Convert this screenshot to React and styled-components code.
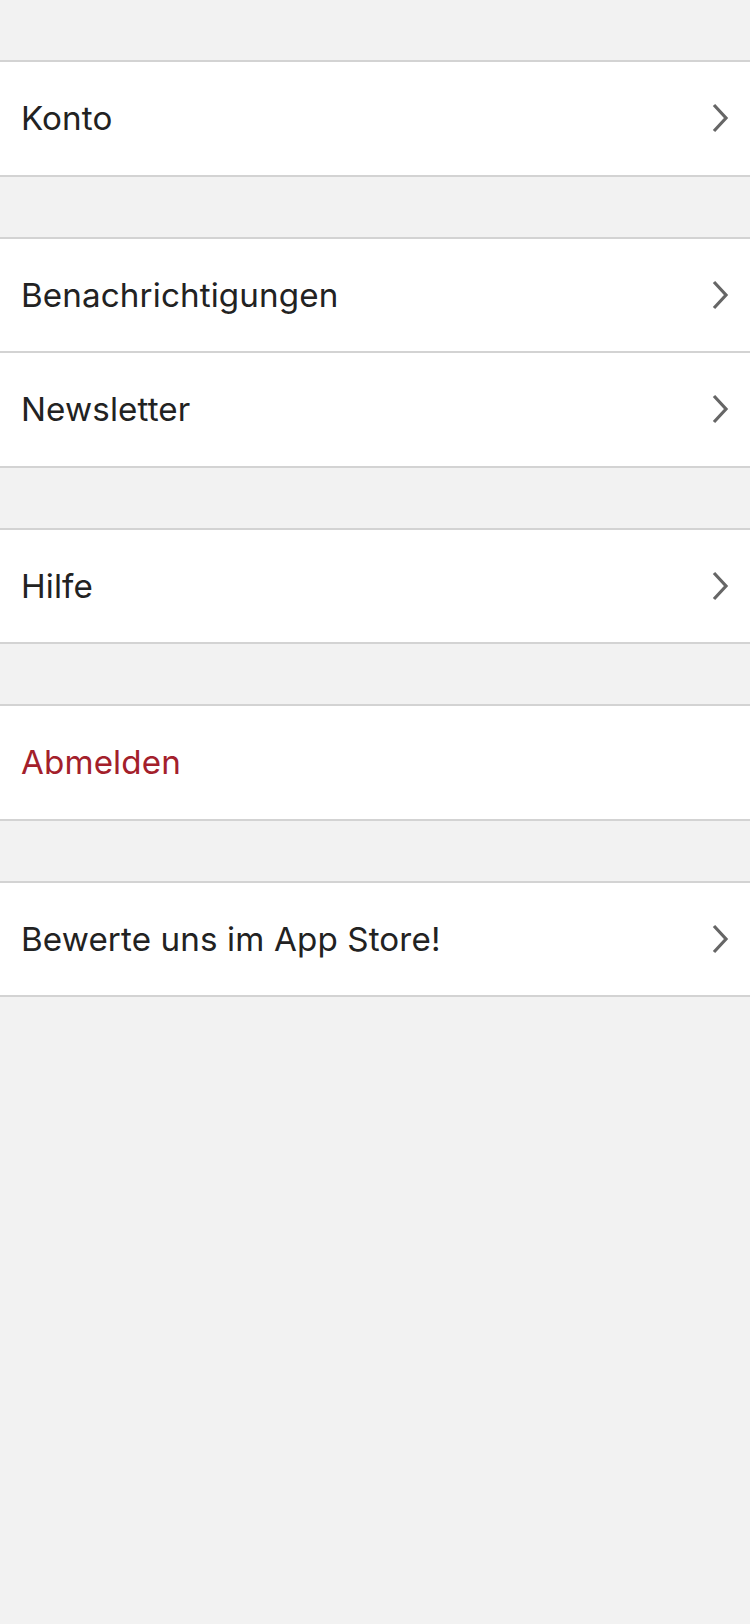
import React from "react";
import styled, { createGlobalStyle } from "styled-components";

const Global = createGlobalStyle`
  html, body { margin: 0; padding: 0; background: #f2f2f2; }
  body { font-family: Inter, "Noto Sans", sans-serif; -webkit-font-smoothing: antialiased; }
`;

const Page = styled.div`
  min-height: 1624px;
  background: #f2f2f2;
  padding-top: 60px;
  display: flex;
  flex-direction: column;
  gap: 60px;
`;

const Group = styled.div`
  background: #fff;
  border-top: 2px solid #d3d3d3;
  border-bottom: 2px solid #d3d3d3;
  display: flex;
  flex-direction: column;
`;

const Row = styled.div`
  height: 112.5px;
  display: flex;
  align-items: center;
  justify-content: space-between;
  padding: 0 20px 0 21px;
  & + & { border-top: 2px solid #d3d3d3; }
`;

const Label = styled.span`
  font-size: 33.2px;
  color: ${(p) => (p.$danger ? "#a3202b" : "#222222")};
  letter-spacing: 0.12px;
`;

const Chevron = () => (
  <svg width="18" height="30" viewBox="0 0 18 30" fill="none">
    <path d="M2 2 L14 15 L2 28" stroke="#666" strokeWidth="3.2" strokeLinecap="butt" strokeLinejoin="miter" />
  </svg>
);

const groups = [
  [{ label: "Konto" }],
  [{ label: "Benachrichtigungen" }, { label: "Newsletter" }],
  [{ label: "Hilfe" }],
  [{ label: "Abmelden", danger: true, noChevron: true }],
  [{ label: "Bewerte uns im App Store!" }],
];

export default function App() {
  return (
    <>
      <Global />
      <Page>
        {groups.map((g, i) => (
          <Group key={i}>
            {g.map((r) => (
              <Row key={r.label}>
                <Label $danger={r.danger}>{r.label}</Label>
                {!r.noChevron && <Chevron />}
              </Row>
            ))}
          </Group>
        ))}
      </Page>
    </>
  );
}
